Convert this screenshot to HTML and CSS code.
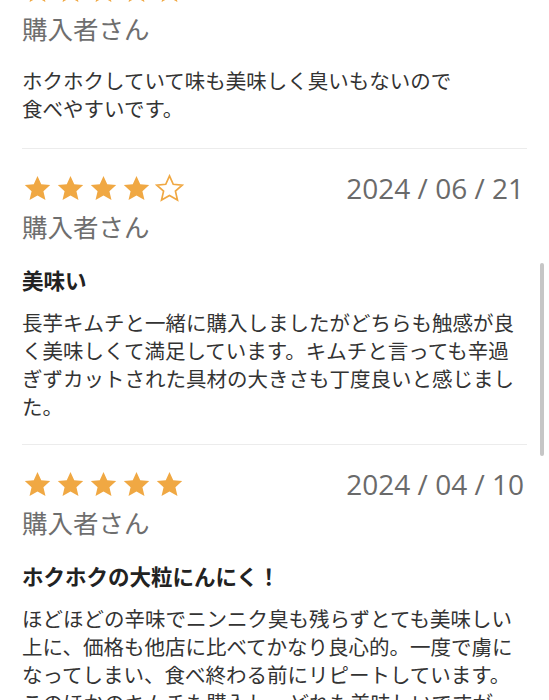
FILE: index.html
```html
<!DOCTYPE html>
<html lang="ja">
<head>
  <meta charset="UTF-8">
  <meta name="viewport" content="width=device-width, initial-scale=1.0">
  <title>レビュー</title>
  <link rel="stylesheet" href="styles.css">
</head>
<body>
  <!-- 星のアイコン -->
  <svg width="0" height="0" class="defs">
    <defs>
      <path id="star-shape" d="M12 1.6l3.1 6.9 7.4.7-5.6 5 1.7 7.4L12 17.8l-6.6 3.8 1.7-7.4-5.6-5 7.4-.7z"/>
    </defs>
  </svg>

  <div class="reviews">

    <div class="review first">
      <div class="review-meta">
        <div class="stars">
          <svg class="star" viewBox="0 0 24 24"><use href="#star-shape"/></svg>
          <svg class="star" viewBox="0 0 24 24"><use href="#star-shape"/></svg>
          <svg class="star" viewBox="0 0 24 24"><use href="#star-shape"/></svg>
          <svg class="star" viewBox="0 0 24 24"><use href="#star-shape"/></svg>
          <svg class="star" viewBox="0 0 24 24"><use href="#star-shape"/></svg>
        </div>
        <span class="date">2024 / 07 / 02</span>
      </div>
      <p class="name">購入者さん</p>
      <p class="body no-title">ホクホクしていて味も美味しく臭いもないので<br>食べやすいです。</p>
    </div>

    <div class="review">
      <div class="review-meta">
        <div class="stars">
          <svg class="star" viewBox="0 0 24 24"><use href="#star-shape"/></svg>
          <svg class="star" viewBox="0 0 24 24"><use href="#star-shape"/></svg>
          <svg class="star" viewBox="0 0 24 24"><use href="#star-shape"/></svg>
          <svg class="star" viewBox="0 0 24 24"><use href="#star-shape"/></svg>
          <svg class="star empty" viewBox="0 0 24 24"><use href="#star-shape"/></svg>
        </div>
        <span class="date">2024 / 06 / 21</span>
      </div>
      <p class="name">購入者さん</p>
      <h3 class="title">美味い</h3>
      <p class="body">長芋キムチと一緒に購入しましたがどちらも触感が良く美味しくて満足しています。キムチと言っても辛過ぎずカットされた具材の大きさも丁度良いと感じました。</p>
    </div>

    <div class="review">
      <div class="review-meta">
        <div class="stars">
          <svg class="star" viewBox="0 0 24 24"><use href="#star-shape"/></svg>
          <svg class="star" viewBox="0 0 24 24"><use href="#star-shape"/></svg>
          <svg class="star" viewBox="0 0 24 24"><use href="#star-shape"/></svg>
          <svg class="star" viewBox="0 0 24 24"><use href="#star-shape"/></svg>
          <svg class="star" viewBox="0 0 24 24"><use href="#star-shape"/></svg>
        </div>
        <span class="date">2024 / 04 / 10</span>
      </div>
      <p class="name">購入者さん</p>
      <h3 class="title">ホクホクの大粒にんにく！</h3>
      <p class="body">ほどほどの辛味でニンニク臭も残らずとても美味しい上に、価格も他店に比べてかなり良心的。一度で虜になってしまい、食べ終わる前にリピートしています。このほかのキムチも購入し、どれも美味しいですが、こちらが一番のお気に入りです。</p>
    </div>

  </div>

  <!-- スクロールバー -->
  <div class="scroll-thumb"></div>
</body>
</html>
```

FILE: styles.css
```css
body {
  margin: 0;
  padding: 0 22px;
  background-color: #fff;
  font-family: "Noto Sans CJK JP", "Noto Sans", sans-serif;
  color: #333;
  overflow: hidden;
}

.defs {
  position: absolute;
}

.reviews {
  margin-top: -25px;
}

.review {
  padding: 24px 0 24px;
  border-bottom: 1px solid #ececec;
}

.review.first {
  padding-top: 0;
  padding-bottom: 26px;
}

.review-meta {
  display: flex;
  justify-content: space-between;
  align-items: center;
  height: 30px;
}

.stars {
  display: flex;
  gap: 4px;
  margin-left: 1px;
}

.star {
  width: 29px;
  height: 29px;
  fill: #f0a843;
}

.star.empty {
  fill: none;
  stroke: #f0a843;
  stroke-width: 1.4;
}

.date {
  font-family: "Open Sans", "Noto Sans", sans-serif;
  font-size: 28px;
  color: #6a6a6a;
  margin-right: 3px;
}

.first .date {
  position: relative;
  top: -4px;
}

.name {
  margin: 6px 0 0;
  font-size: 25.5px;
  line-height: 34px;
  color: #6e6e6e;
}

.title {
  margin: 23px 0 0;
  font-size: 21.5px;
  line-height: 28px;
  font-weight: bold;
  color: #222;
}

.body {
  margin: 14px 0 0;
  font-size: 20.5px;
  line-height: 28px;
  color: #333;
}

.body.no-title {
  margin-top: 21px;
}

.scroll-thumb {
  position: fixed;
  right: 5px;
  top: 263px;
  width: 4px;
  height: 193px;
  border-radius: 2px;
  background-color: #c6c6c6;
}
```
